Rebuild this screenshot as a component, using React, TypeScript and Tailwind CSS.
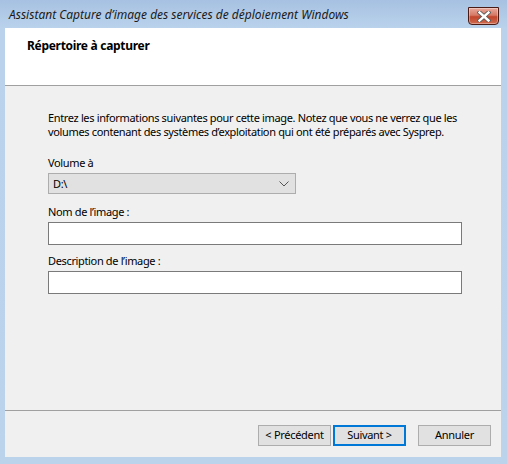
import React from "react";

const font = { fontFamily: '"Noto Sans", "Open Sans", sans-serif' };

function CloseButton() {
  return (
    <div className="relative w-[31px] h-[18px] rounded-b-[4px] border border-[#4a1a14] bg-[linear-gradient(#e9a99b,#d57a66_45%,#c2452c_55%,#cf6a4f)] flex items-center justify-center shadow-[inset_0_0_0_1px_rgba(255,255,255,0.35)]">
      <svg width="14" height="11" viewBox="0 0 14 11">
        <path d="M2.5 1.5 L11.5 9.5 M11.5 1.5 L2.5 9.5" stroke="#5a5a5a" strokeWidth="4.2" strokeLinecap="square" />
        <path d="M2.5 1.5 L11.5 9.5 M11.5 1.5 L2.5 9.5" stroke="#ffffff" strokeWidth="2.4" strokeLinecap="square" />
      </svg>
    </div>
  );
}

function Button({ children, focused }: { children: React.ReactNode; focused?: boolean }) {
  return (
    <div
      className={
        "w-[73px] h-[21px] flex items-center justify-center bg-[#e1e1e1] text-[11px] tracking-[-0.3px] text-black " +
        (focused ? "border-2 border-[#0078d7]" : "border border-[#adadad]")
      }
    >
      {children}
    </div>
  );
}

export default function App() {
  return (
    <div
      className="w-[507px] h-[464px] flex flex-col bg-[linear-gradient(#a6c1e1,#bad2ec_28px,#bcd3ec)] text-black"
      style={font}
    >
      <div className="h-[28px] flex items-start pl-[9px] pr-[8px]">
        <div className="flex-1 pt-[7px] italic text-[12px] text-[#1b1b1b] leading-[16px]">
          Assistant Capture d’image des services de déploiement Windows
        </div>
        <div className="pt-[7px]">
          <CloseButton />
        </div>
      </div>
      <div className="flex-1 ml-[5px] mr-[6px] mb-[7px] flex flex-col bg-[#f0f0f0]">
        <div className="h-[58px] bg-white border-b border-[#a0a0a0] pl-[22px] pt-[10px]">
          <div className="font-bold text-[12px] leading-[16px] tracking-[-0.3px]">Répertoire à capturer</div>
        </div>
        <div className="flex-1 flex flex-col pl-[43px] pt-[25px] text-[11px] leading-[14px] tracking-[-0.35px]">
          <div className="whitespace-nowrap">
            Entrez les informations suivantes pour cette image. Notez que vous ne verrez que les
            <br />
            volumes contenant des systèmes d’exploitation qui ont été préparés avec Sysprep.
          </div>
          <div className="mt-[17px] h-[14px]">Volume à</div>
          <div className="mt-[3px] w-[248px] h-[21px] border border-[#adadad] bg-[#e1e1e1] flex items-center pl-[4px] pr-[6px]">
            <span className="flex-1">D:\</span>
            <svg width="10" height="6" viewBox="0 0 10 6">
              <path d="M0.5 0.5 L5 5 L9.5 0.5" fill="none" stroke="#555" strokeWidth="1" />
            </svg>
          </div>
          <div className="mt-[11px] h-[14px]">Nom de l’image :</div>
          <div className="mt-[3px] w-[414px] h-[23px] border border-[#7a7a7a] bg-white" />
          <div className="mt-[9px] h-[14px]">Description de l’image :</div>
          <div className="mt-[3px] w-[414px] h-[23px] border border-[#7a7a7a] bg-white" />
        </div>
        <div className="h-[47px] border-t border-[#a0a0a0] flex items-start justify-end pt-[14px] pr-[10px]">
          <Button>&lt; Précédent</Button>
          <div className="w-[2px]" />
          <Button focused>Suivant &gt;</Button>
          <div className="w-[12px]" />
          <Button>Annuler</Button>
        </div>
      </div>
    </div>
  );
}
